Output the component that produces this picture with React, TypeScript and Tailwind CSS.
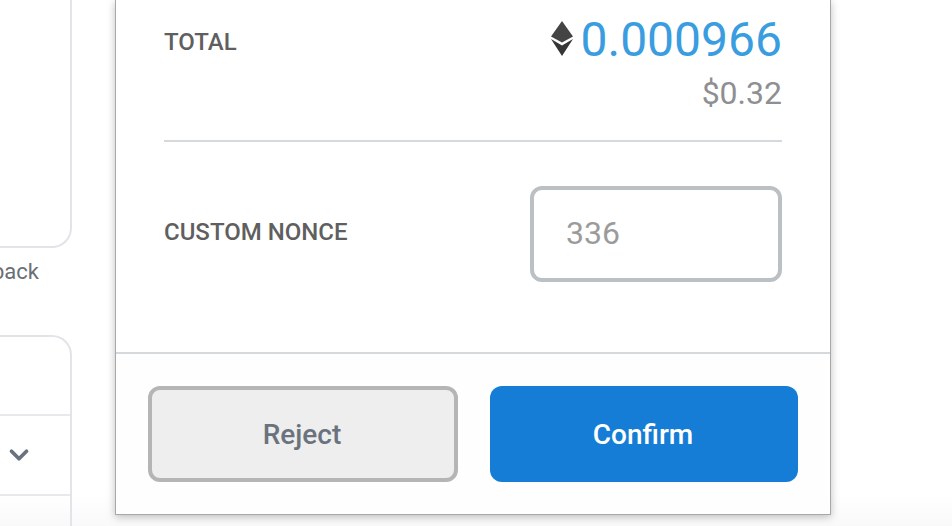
import { ChevronDown } from "lucide-react";

const EthIcon = () => (
  <svg width="24" height="36" viewBox="0 0 24 36" className="shrink-0 -mt-[3px]">
    <path d="M12 0 L23 15.5 L12 21.5 L1 15.5 Z" fill="#444445" />
    <path d="M1 18 L12 24.5 L23 18 L12 35 Z" fill="#363637" />
  </svg>
);

const SideColumn = () => (
  <div className="w-[72px] h-full shrink-0 flex flex-col overflow-hidden">
    <div className="h-[248px] shrink-0 -ml-[20px] border-2 border-t-0 border-[#e3e4e8] rounded-br-[20px]" />
    <div className="h-[46px] shrink-0 flex items-center justify-end pr-[33px] whitespace-nowrap text-[22px] text-[#6a6f75]">
      Feedback
    </div>
    <div className="mt-[41px] flex-1 -ml-[20px] border-2 border-b-0 border-[#e3e4e8] rounded-tr-[20px]">
      <div className="h-[79px] border-b-2 border-[#e8e9ec]" />
      <div className="h-[80px] border-b-2 border-[#e8e9ec] flex items-center justify-end pr-[36px]">
        <ChevronDown size={30} strokeWidth={3} color="#6a737d" />
      </div>
    </div>
  </div>
);

export default function App() {
  return (
    <div className="w-[952px] h-[526px] overflow-hidden bg-gradient-to-b from-white from-[94%] to-[#f9f9f9] flex gap-[43px] font-['Roboto',sans-serif]">
      <SideColumn />
      <div className="w-[716px] h-[515px] shrink-0 flex flex-col bg-white border-x border-b border-[#a8a8a8] shadow-[0_2px_8px_rgba(0,0,0,0.25)]">
        <div className="h-[352px] shrink-0 pl-[48px] pr-[48px] flex flex-col">
          <div className="h-[142px] shrink-0 border-b-2 border-[#d6d9dc] flex justify-between">
            <div className="pt-[27px] text-[24px] leading-[30px] font-medium text-[#5f5f5f]">TOTAL</div>
            <div className="flex flex-col items-end pt-[11px]">
              <div className="flex items-center gap-[7px] h-[58px]">
                <EthIcon />
                <span className="text-[48px] leading-[58px] text-[#3a9de0]">0.000966</span>
              </div>
              <div className="mt-[5px] text-[32px] leading-[38px] text-[#8e8e93]">$0.32</div>
            </div>
          </div>
          <div className="mt-[44px] flex justify-between">
            <div className="pt-[31px] text-[24px] leading-[30px] font-medium text-[#5f5f5f]">CUSTOM NONCE</div>
            <div className="w-[252px] h-[96px] border-4 border-[#bbc0c5] rounded-[12px] flex items-center pl-[32px] pb-[2px] text-[32px] text-[#9b9b9b]">
              336
            </div>
          </div>
        </div>
        <div className="flex-1 border-t-2 border-[#d6d9dc] bg-[#fefefe] px-[32px] pt-[32px] flex gap-[32px]">
          <button className="w-[310px] h-[96px] border-4 border-[#b5b5b5] bg-[#eeeeee] rounded-[12px] pr-[2px] pt-[2px] text-[28px] font-medium text-[#6a737d]">
            Reject
          </button>
          <button className="w-[308px] h-[96px] bg-[#157dd5] rounded-[12px] pr-[2px] pt-[2px] text-[28px] font-medium text-white">
            Confirm
          </button>
        </div>
      </div>
    </div>
  );
}
